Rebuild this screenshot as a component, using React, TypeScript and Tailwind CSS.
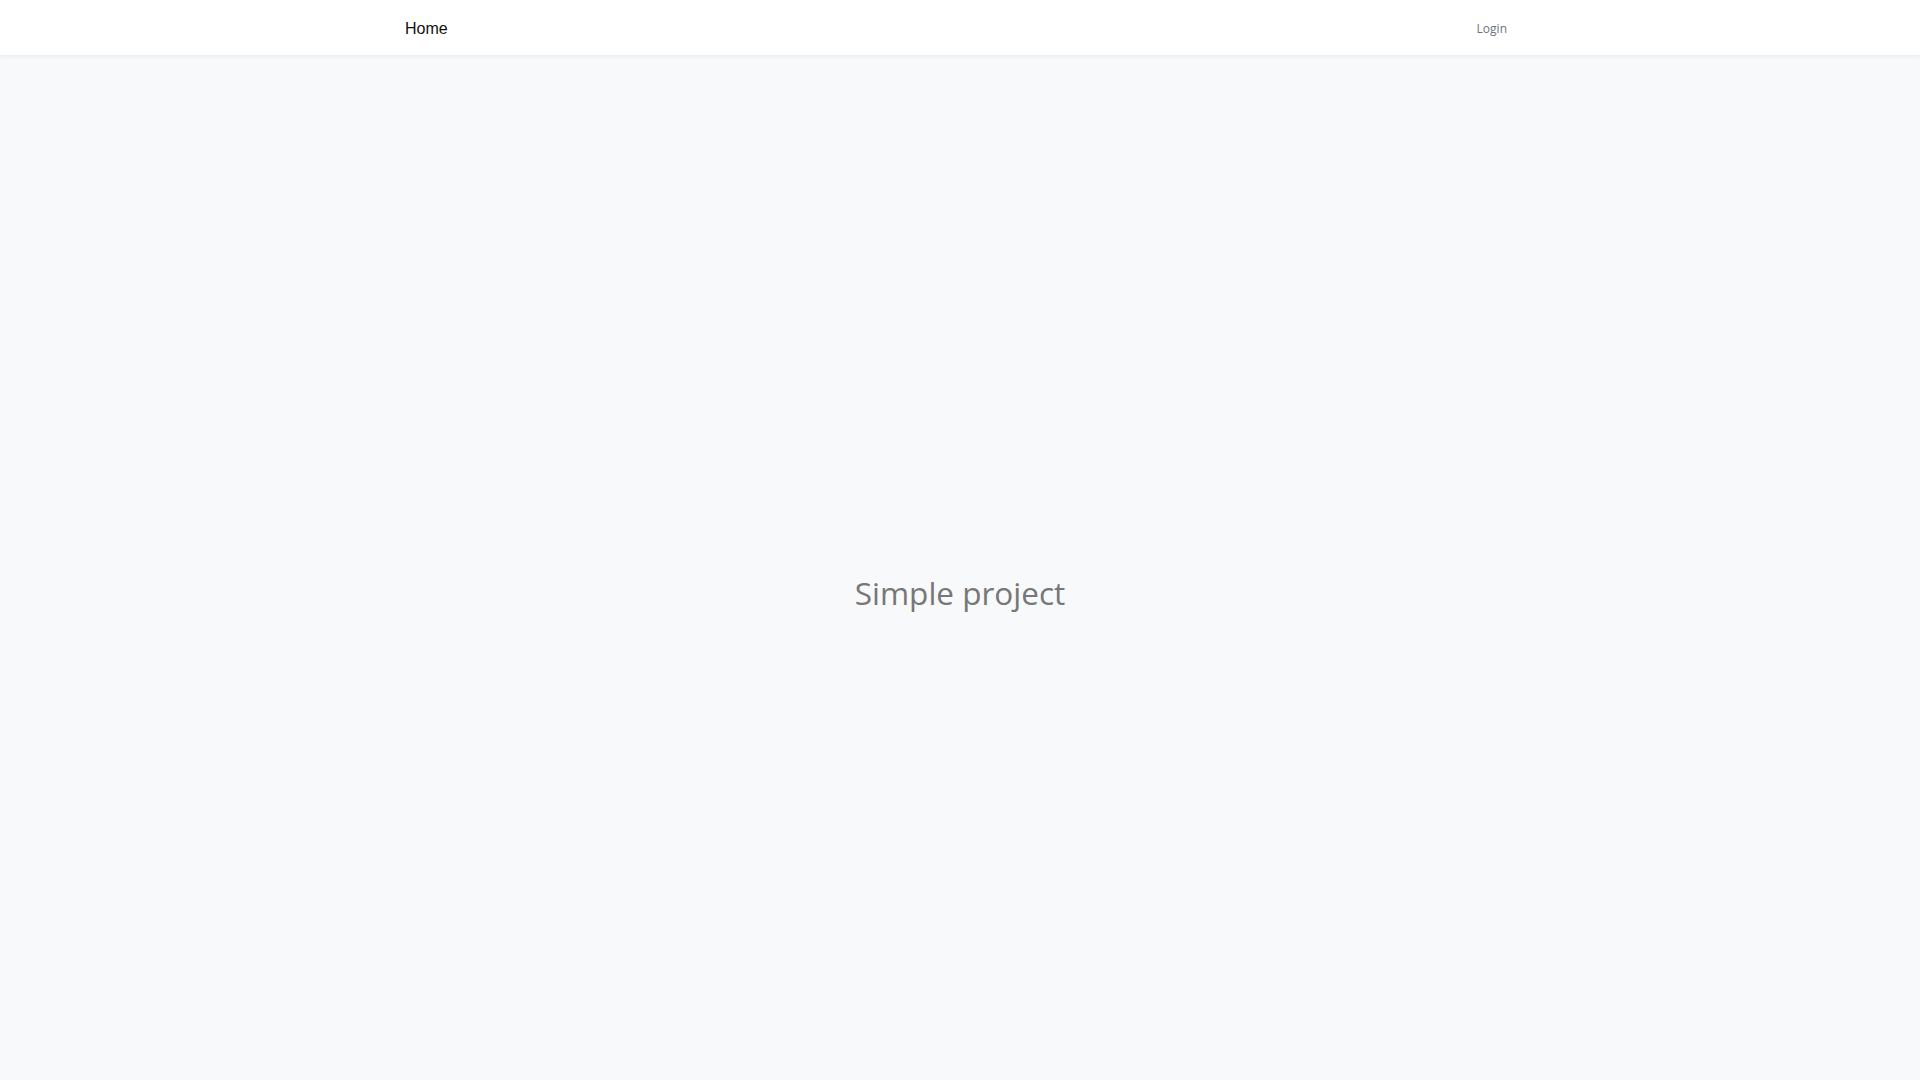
export default function App() {
  return (
    <div className="min-h-screen bg-[#f8f9fa]">
      {/* Navbar */}
      <nav className="h-[55px] bg-white shadow-[0_2px_4px_rgba(0,0,0,0.06)] relative z-10">
        <div className="mx-auto flex h-full w-[1140px] items-center justify-between px-[15px] pt-[3px]">
          <a className="text-[16px] text-[#111] font-['Liberation_Sans',Arial,sans-serif]">Home</a>
          <a className="px-2 text-[12px] text-[#6c757d] font-['Open_Sans',sans-serif]">Login</a>
        </div>
      </nav>
      {/* Main */}
      <main className="flex h-[calc(100vh-5px)] items-center justify-center">
        <h1 className="text-[31.5px] text-[#777] font-['Open_Sans',sans-serif]">Simple project</h1>
      </main>
    </div>
  );
}
